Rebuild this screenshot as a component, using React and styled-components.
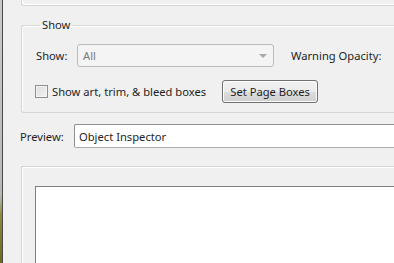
import styled, { createGlobalStyle } from "styled-components";

const GlobalStyle = createGlobalStyle`
  html, body {
    margin: 0;
    padding: 0;
    background: #f0f0f0;
  }
  body {
    font-family: "Noto Sans", "Open Sans", sans-serif;
    font-size: 11.2px;
    color: #1e1e1e;
  }
`;

const Window = styled.div`
  display: flex;
  width: 394px;
  height: 263px;
  overflow: hidden;
  background: #f0f0f0;
`;

const WindowEdge = styled.div`
  flex: none;
  width: 2px;
  margin-right: 3px;
  border-right: 1px solid #4a4a4a;
  background: linear-gradient(
    to bottom,
    #c9c9c9 0%,
    #b8b8b8 74%,
    #8a8a3a 82%,
    #6b6b1e 100%
  );
`;

const Content = styled.div`
  flex: none;
  width: 520px;
  padding-left: 15px;
  display: flex;
  flex-direction: column;
`;

const TopGroupTail = styled.div`
  height: 5px;
  border: 1px solid #d5d5d5;
  border-top: none;
  border-right: none;
  border-bottom-left-radius: 3px;
  box-shadow: inset 1px -1px 0 #fff;
`;

const Group = styled.fieldset`
  margin: 11px 0 0;
  padding: 11px 0 9px 13px;
  border: 1px solid #d5d5d5;
  border-right: none;
  border-radius: 3px 0 0 3px;
  box-shadow: inset 1px 1px 0 #fff;
  min-inline-size: 0;
`;

const Legend = styled.legend`
  padding: 0 2px;
  margin-left: 5px;
  line-height: 16px;
  color: #1e1e1e;
`;

const Row = styled.div`
  display: flex;
  align-items: center;
  height: 23px;
  margin-top: ${(p) => p.$gap || 0}px;
`;

const Label = styled.span`
  flex: none;
  width: ${(p) => p.$width}px;
  margin-left: ${(p) => p.$indent || 0}px;
  white-space: nowrap;
`;

const Select = styled.div`
  flex: none;
  box-sizing: border-box;
  width: 197px;
  height: 23px;
  display: flex;
  align-items: center;
  justify-content: space-between;
  padding: 0 6px 0 5px;
  border: 1px solid #b8bcc0;
  border-radius: 3px;
  background: #f4f4f4;
  color: #7a7a7a;
`;

const Arrow = styled.span`
  width: 0;
  height: 0;
  border-left: 4px solid transparent;
  border-right: 4px solid transparent;
  border-top: 4px solid #a8a8a8;
`;

const Checkbox = styled.span`
  flex: none;
  box-sizing: border-box;
  width: 13px;
  height: 13px;
  margin-right: 4px;
  border: 1px solid #8e8f8f;
  background: linear-gradient(135deg, #dcdcdc, #f4f4f4);
  box-shadow: inset 0 0 0 1px #f4f4f4;
`;

const Button = styled.button`
  flex: none;
  box-sizing: border-box;
  width: 96px;
  height: 23px;
  margin-left: ${(p) => p.$offset}px;
  padding: 0;
  font: inherit;
  color: #1e1e1e;
  border: 1px solid #707070;
  border-radius: 3px;
  background: linear-gradient(
    to bottom,
    #f2f2f2 0%,
    #ebebeb 50%,
    #dddddd 51%,
    #cfcfcf 100%
  );
  box-shadow: inset 0 0 0 1px #fcfcfc;
`;

const PreviewRow = styled.div`
  display: flex;
  align-items: center;
  margin-top: 11px;
  margin-left: -1px;
`;

const TextBox = styled.div`
  flex: 1;
  box-sizing: border-box;
  height: 24px;
  display: flex;
  align-items: center;
  padding-left: 4px;
  border: 1px solid #abadb3;
  border-top-color: #8e8f8f;
  border-left-color: #8e8f8f;
  border-radius: 2px 0 0 2px;
  background: #fff;
`;

const PreviewPanel = styled.div`
  flex: 1;
  margin-top: 18px;
  padding: 19px 0 0 13px;
  border: 1px solid #d5d5d5;
  border-right: none;
  border-bottom: none;
  box-shadow: inset 1px 1px 0 #fff;
  display: flex;
`;

const Canvas = styled.div`
  flex: 1;
  background: #fff;
  border: 1px solid #7f7f7f;
  border-right: none;
  border-bottom: none;
`;

export default function App() {
  return (
    <Window>
      <GlobalStyle />
      <WindowEdge />
      <Content>
        <TopGroupTail />
        <Group>
          <Legend>Show</Legend>
          <Row>
            <Label $width={41} $indent={1}>Show:</Label>
            <Select>
              <span>All</span>
              <Arrow />
            </Select>
            <Label $indent={17}>Warning Opacity:</Label>
          </Row>
          <Row $gap={13}>
            <Checkbox />
            <Label>Show art, trim, &amp; bleed boxes</Label>
            <Button $offset={16}>Set Page Boxes</Button>
          </Row>
        </Group>
        <PreviewRow>
          <Label $width={54}>Preview:</Label>
          <TextBox>Object Inspector</TextBox>
        </PreviewRow>
        <PreviewPanel>
          <Canvas />
        </PreviewPanel>
      </Content>
    </Window>
  );
}
